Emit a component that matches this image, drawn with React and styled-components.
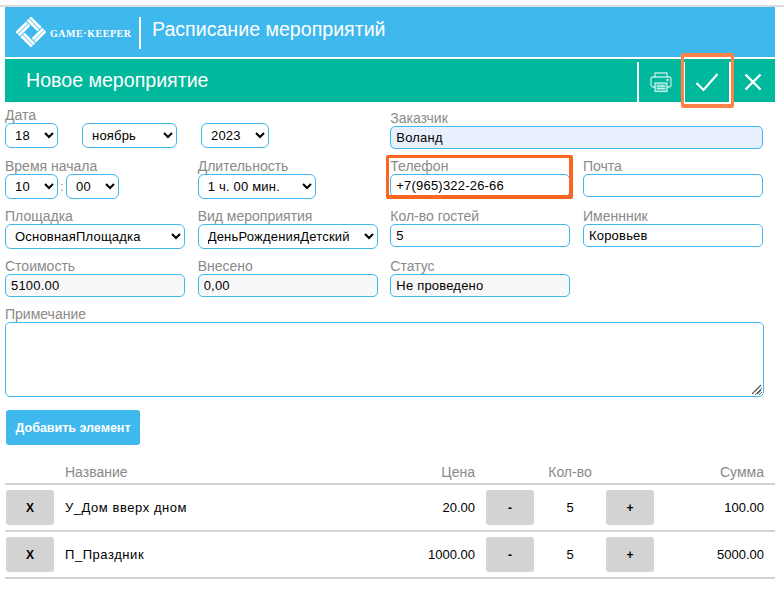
import React from "react";
import styled, { createGlobalStyle } from "styled-components";

const BLUE = "#3fb8ee";
const TEAL = "#00b89c";

const GlobalStyle = createGlobalStyle`
  html, body {
    margin: 0;
    padding: 0;
    background: #fff;
  }
  body {
    font-family: "Liberation Sans", Arial, sans-serif;
    overflow: hidden;
  }
  * {
    box-sizing: border-box;
  }
`;

const Page = styled.div`
  position: relative;
  width: 784px;
  height: 597px;
  padding-top: 5px;
`;

const TopStrip = styled.div`
  height: 2px;
  background: #dcdcdc;
`;

const Content = styled.div`
  width: 775px;
  padding-left: 5px;
`;

const Header = styled.header`
  display: flex;
  align-items: center;
  height: 50px;
  padding-left: 11px;
  background: ${BLUE};
  color: #fff;
`;

const Logo = styled.div`
  display: flex;
  align-items: center;
  width: 123px;
  gap: 4px;
`;

const LogoText = styled.span`
  font-family: "Liberation Serif", serif;
  font-weight: bold;
  font-size: 10px;
  letter-spacing: 0.55px;
  white-space: nowrap;
  padding-top: 2px;
`;

const HeaderDivider = styled.div`
  width: 2px;
  height: 32px;
  margin-top: 1px;
  background: #fff;
`;

const HeaderTitle = styled.h1`
  margin: 0 0 5px 11px;
  font-size: 19.6px;
  font-weight: normal;
`;

const SubHeader = styled.div`
  display: flex;
  align-items: stretch;
  height: 43px;
  margin-top: 2px;
  background: ${TEAL};
  color: #fff;
`;

const SubTitle = styled.h2`
  flex: 1;
  margin: 0;
  padding-left: 21px;
  font-size: 19.6px;
  font-weight: normal;
  line-height: 43px;
`;

const ToolButton = styled.button`
  display: flex;
  align-items: center;
  justify-content: center;
  width: ${(props) => props.$width}px;
  margin-top: 3px;
  padding: 0;
  border: 0;
  border-left: ${(props) => (props.$divider ? "2px solid #fff" : "0")};
  background: transparent;
  color: #fff;
`;

const Form = styled.form`
  display: grid;
  grid-template-columns: repeat(4, 180px);
  grid-template-rows: 51px 50px 50px 48px auto;
  column-gap: 12.67px;
  margin-top: 5px;
`;

const Field = styled.div`
  grid-column: span ${(props) => props.$span || 1};
  margin-top: ${(props) => props.$offset || 0}px;
`;

const Label = styled.label`
  display: block;
  height: 16px;
  color: #8a8a8a;
  font-size: 14px;
  line-height: 16px;
  white-space: nowrap;
`;

const Row = styled.div`
  display: flex;
  align-items: center;
`;

const Select = styled.select`
  width: ${(props) => (props.$width ? `${props.$width}px` : "100%")};
  height: 25px;
  margin-left: ${(props) => props.$left || 0}px;
  padding: 0 0 0 5px;
  border: 1px solid ${BLUE};
  border-radius: 6px;
  background: #fff;
  color: #000;
  font-family: inherit;
  font-size: 13px;
  letter-spacing: 0.2px;
`;

const Colon = styled.span`
  width: 8px;
  color: #8a8a8a;
  font-size: 12px;
  text-align: center;
`;

const Input = styled.input`
  display: block;
  width: 100%;
  height: 23px;
  padding: 0 5px;
  border: 1px solid ${BLUE};
  border-radius: 5px;
  background: ${(props) => props.$fill || "#fff"};
  color: #000;
  font-family: inherit;
  font-size: 13px;
  letter-spacing: 0.2px;
`;

const NoteBox = styled.div`
  position: relative;
  width: 759px;
`;

const TextArea = styled.textarea`
  display: block;
  width: 100%;
  height: 75px;
  padding: 5px;
  border: 1px solid ${BLUE};
  border-radius: 5px;
  background: #fff;
`;

const Grip = styled.svg`
  position: absolute;
  right: 2px;
  bottom: 2px;
`;

const AddButton = styled.button`
  display: block;
  width: 134px;
  height: 35px;
  margin: 13px 0 0 1px;
  padding: 0;
  border: 0;
  border-radius: 3px;
  background: ${BLUE};
  color: #fff;
  font-family: inherit;
  font-size: 12.5px;
  font-weight: bold;
`;

const Table = styled.div`
  margin-top: 19px;
`;

const columns = "60px 360px 50px 11px 48px 72px 48px 121px";

const HeadRow = styled.div`
  display: grid;
  grid-template-columns: ${columns};
  align-items: center;
  height: 21px;
  padding-bottom: 4px;
  border-bottom: 2px solid #d3d3d3;
  color: #8a8a8a;
  font-size: 14px;
  line-height: 16px;
`;

const ItemRow = styled.div`
  display: grid;
  grid-template-columns: ${columns};
  align-items: center;
  height: 47px;
  border-bottom: 2px solid #d3d3d3;
  color: #000;
  font-size: 13px;
`;

const Cell = styled.div`
  grid-column: ${(props) => props.$col};
  text-align: ${(props) => props.$align || "left"};
  padding-right: ${(props) => props.$pad || 0}px;
  white-space: nowrap;
`;

const ItemName = styled(Cell)`
  letter-spacing: 0.55px;
`;

const GrayButton = styled.button`
  display: block;
  width: 48px;
  height: 35px;
  margin-left: ${(props) => props.$left || 0}px;
  padding: 0;
  border: 0;
  border-radius: 3px;
  background: #d3d3d3;
  color: #000;
  font-family: inherit;
  font-size: 12px;
  font-weight: bold;
`;

const Highlight = styled.div`
  position: absolute;
  left: ${(props) => props.$x}px;
  top: ${(props) => props.$y}px;
  width: ${(props) => props.$w}px;
  height: ${(props) => props.$h}px;
  border-style: solid;
  border-color: ${(props) => props.$color};
  border-width: ${(props) => props.$border};
  border-radius: 2px;
  pointer-events: none;
`;

function LogoMark() {
  return (
    <svg width="30" height="30" viewBox="0 0 30 30" fill="#fff">
      <g transform="rotate(45 15 15)">
        <rect x="4" y="4" width="15" height="2.7" />
        <rect x="4" y="7.4" width="15" height="2.7" />
        <rect x="20" y="4" width="2.7" height="15" />
        <rect x="23.3" y="4" width="2.7" height="15" />
        <rect x="11" y="20" width="15" height="2.7" />
        <rect x="11" y="23.3" width="15" height="2.7" />
        <rect x="4" y="11" width="2.7" height="15" />
        <rect x="7.4" y="11" width="2.7" height="15" />
      </g>
    </svg>
  );
}

function PrintIcon() {
  return (
    <svg
      width="22"
      height="22"
      viewBox="0 0 22 22"
      fill="none"
      stroke="#fff"
      strokeOpacity="0.72"
      strokeWidth="1.3"
    >
      <path d="M5 6V2h12v4" />
      <path d="M5 16H3a2 2 0 0 1-2-2V8a2 2 0 0 1 2-2h16a2 2 0 0 1 2 2v6a2 2 0 0 1-2 2h-2" />
      <rect x="5" y="12" width="12" height="8.5" fill="#fff" fillOpacity="0.25" />
      <path d="M7 15h8M7 17.5h8" />
      <circle cx="17.5" cy="9" r="0.6" />
    </svg>
  );
}

function CheckIcon() {
  return (
    <svg width="24" height="20" viewBox="0 0 24 20" fill="none" stroke="#fff" strokeWidth="2.2">
      <path d="M1.5 11l7 7L22.5 2" />
    </svg>
  );
}

function CloseIcon() {
  return (
    <svg width="18" height="18" viewBox="0 0 18 18" fill="none" stroke="#fff" strokeWidth="2.4">
      <path d="M1.5 1.5l15 15M16.5 1.5l-15 15" />
    </svg>
  );
}

function ResizeGrip() {
  return (
    <Grip width="11" height="11" viewBox="0 0 11 11" fill="none" stroke="#555" strokeWidth="1.1">
      <path d="M1 10L10 1M6 10l4-4" />
    </Grip>
  );
}

function Choice({ value, width, left }) {
  return (
    <Select $width={width} $left={left} defaultValue={value}>
      <option>{value}</option>
    </Select>
  );
}

const items = [
  { name: "У_Дом вверх дном", price: "20.00", qty: 5, total: "100.00" },
  { name: "П_Праздник", price: "1000.00", qty: 5, total: "5000.00" },
];

export default function App() {
  return (
    <Page>
      <GlobalStyle />
      <TopStrip />
      <Content>
        <Header>
          <Logo>
            <LogoMark />
            <LogoText>GAME·KEEPER</LogoText>
          </Logo>
          <HeaderDivider />
          <HeaderTitle>Расписание мероприятий</HeaderTitle>
        </Header>
        <SubHeader>
          <SubTitle>Новое мероприятие</SubTitle>
          <ToolButton $divider $width={46}>
            <PrintIcon />
          </ToolButton>
          <ToolButton $divider $width={46}>
            <CheckIcon />
          </ToolButton>
          <ToolButton $divider $width={46}>
            <CloseIcon />
          </ToolButton>
        </SubHeader>

        <Form>
          <Field $span={2}>
            <Label>Дата</Label>
            <Row>
              <Choice value="18" width={53} />
              <Choice value="ноябрь" width={95} left={24} />
              <Choice value="2023" width={68} left={24} />
            </Row>
          </Field>
          <Field $span={2} $offset={3}>
            <Label>Заказчик</Label>
            <Input readOnly defaultValue="Воланд" $fill="#e8f0fe" />
          </Field>

          <Field>
            <Label>Время начала</Label>
            <Row>
              <Choice value="10" width={53} />
              <Colon>:</Colon>
              <Choice value="00" width={53} />
            </Row>
          </Field>
          <Field>
            <Label>Длительность</Label>
            <Choice value="1 ч. 00 мин." width={118} />
          </Field>
          <Field>
            <Label>Телефон</Label>
            <Input readOnly defaultValue="+7(965)322-26-66" />
          </Field>
          <Field>
            <Label>Почта</Label>
            <Input readOnly />
          </Field>

          <Field>
            <Label>Площадка</Label>
            <Choice value="ОсновнаяПлощадка" />
          </Field>
          <Field>
            <Label>Вид мероприятия</Label>
            <Choice value="ДеньРожденияДетский" />
          </Field>
          <Field>
            <Label>Кол-во гостей</Label>
            <Input readOnly defaultValue="5" />
          </Field>
          <Field>
            <Label>Именнник</Label>
            <Input readOnly defaultValue="Коровьев" />
          </Field>

          <Field>
            <Label>Стоимость</Label>
            <Input readOnly defaultValue="5100.00" $fill="#f8f8f8" />
          </Field>
          <Field>
            <Label>Внесено</Label>
            <Input readOnly defaultValue="0,00" $fill="#f8f8f8" />
          </Field>
          <Field>
            <Label>Статус</Label>
            <Input readOnly defaultValue="Не проведено" $fill="#f8f8f8" />
          </Field>
          <Field />

          <Field $span={4}>
            <Label>Примечание</Label>
            <NoteBox>
              <TextArea defaultValue="" />
              <ResizeGrip />
            </NoteBox>
          </Field>
        </Form>

        <AddButton type="button">Добавить элемент</AddButton>

        <Table>
          <HeadRow>
            <Cell $col={2}>Название</Cell>
            <Cell $col={3} $align="right">Цена</Cell>
            <Cell $col={6} $align="center">Кол-во</Cell>
            <Cell $col={8} $align="right" $pad={11}>Сумма</Cell>
          </HeadRow>
          {items.map((item) => (
            <ItemRow key={item.name}>
              <GrayButton type="button" $left={1}>X</GrayButton>
              <ItemName $col={2}>{item.name}</ItemName>
              <Cell $col={3} $align="right">{item.price}</Cell>
              <Cell $col={5}>
                <GrayButton type="button">-</GrayButton>
              </Cell>
              <Cell $col={6} $align="center">{item.qty}</Cell>
              <Cell $col={7}>
                <GrayButton type="button">+</GrayButton>
              </Cell>
              <Cell $col={8} $align="right" $pad={11}>{item.total}</Cell>
            </ItemRow>
          ))}
        </Table>
      </Content>

      <Highlight $x={681} $y={53} $w={53} $h={55} $color="#ff8347" $border="4px 3px" />
      <Highlight $x={386} $y={155} $w={187} $h={44} $color="#fb6620" $border="3px 4px 4px 3px" />
    </Page>
  );
}
